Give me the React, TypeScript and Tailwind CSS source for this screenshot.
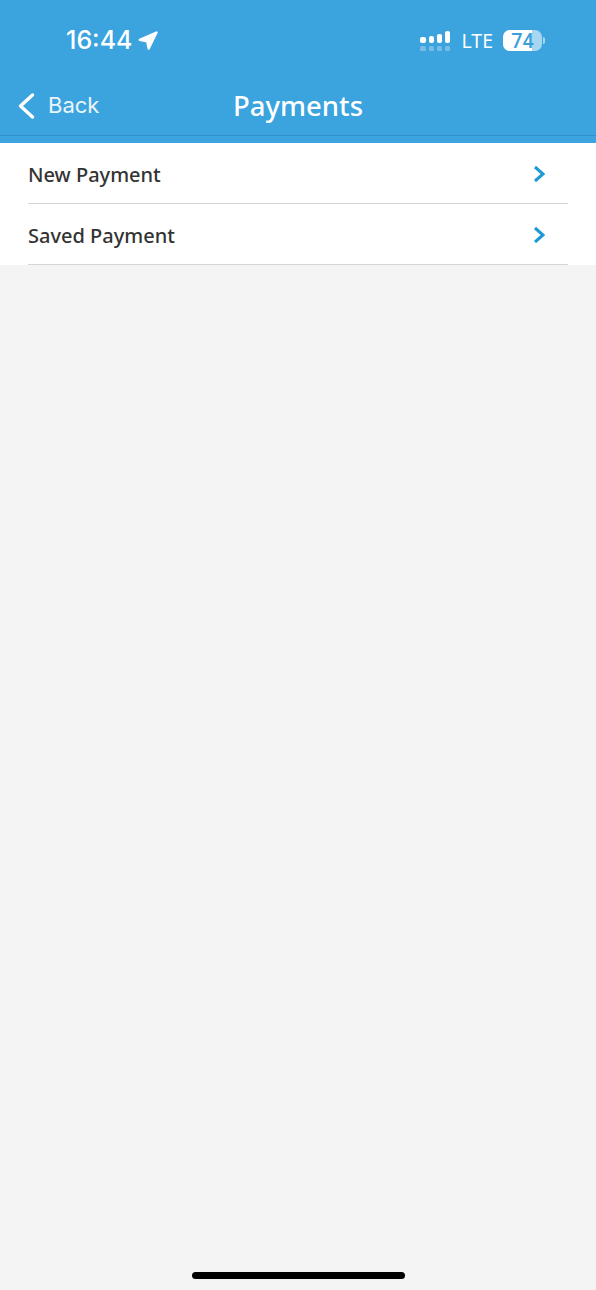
const rows = ["New Payment", "Saved Payment"];

function Signal() {
  const bars = ["h-[6px]", "h-[7px]", "h-[9px]", "h-[12px]"];
  return (
    <div className="flex flex-col gap-[3px] w-[30px]">
      <div className="flex items-end justify-between h-[12px]">
        {bars.map((h, i) => (
          <div key={i} className={`w-[5.5px] rounded-[2px] bg-white ${h}`} />
        ))}
      </div>
      <div className="flex justify-between">
        {bars.map((_, i) => (
          <div key={i} className="w-[5.5px] h-[5px] rounded-[1.5px] bg-white/30" />
        ))}
      </div>
    </div>
  );
}

function Battery() {
  return (
    <div className="flex items-center gap-[1px]">
      <div className="relative w-[39px] h-[21px] rounded-[7px] bg-white/55">
        <div className="h-full w-[29px] rounded-l-[7px] bg-white" />
        <span className="absolute inset-0 flex items-center justify-center font-['Roboto',sans-serif] text-[20px] font-medium leading-none text-[#3b9fdc]">
          74
        </span>
      </div>
      <div className="w-[2px] h-[7px] rounded-r-full bg-white/55" />
    </div>
  );
}

export default function App() {
  return (
    <div className="h-[1290px] w-[596px] overflow-hidden bg-[#f4f4f4] font-['Noto_Sans',sans-serif]">
      {/* Statusbar + Titel */}
      <header className="bg-[#3ba3de] h-[143px] text-white">
        <div className="flex h-[136px] flex-col border-b border-[#3191cb]">
          <div className="flex items-center justify-between pl-[66px] pr-[51px] pt-[21px] h-[60px]">
            <div className="flex items-center gap-[5px]">
              <span className="font-['Inter',sans-serif] text-[25px] font-medium leading-none">16:44</span>
              <svg width="20" height="20" viewBox="0 0 20 20" fill="white" stroke="white" strokeWidth="2.4" strokeLinejoin="round">
                <path d="M18.5 1.5 1.8 8.8l7.4 1.6 1.5 7.2Z" />
              </svg>
            </div>
            <div className="flex items-center">
              <Signal />
              <span className="ml-[11px] mr-[10px] text-[19.5px] leading-none">LTE</span>
              <Battery />
            </div>
          </div>
          <div className="grid flex-1 grid-cols-[1fr_auto_1fr] items-center pt-[16px]">
            <div className="flex items-center gap-[11px] pl-[17px]">
              <svg width="20" height="30" viewBox="0 0 20 30" fill="none" stroke="white" strokeWidth="3.4" strokeLinecap="round" strokeLinejoin="round">
                <path d="M15.5 4 3.5 15l12 11" />
              </svg>
              <span className="pb-[2px] font-['Inter',sans-serif] text-[22px] leading-none text-white/90">Back</span>
            </div>
            <h1 className="text-[27.5px] font-medium leading-none">Payments</h1>
            <div />
          </div>
        </div>
      </header>

      {/* Liste */}
      <ul className="bg-white px-[28px]">
        {rows.map((row) => (
          <li key={row} className="flex h-[61px] items-center justify-between border-b-[1.5px] border-[#d6d6d6]">
            <span className="pt-[4px] text-[20px] font-medium leading-none text-[#333333]">{row}</span>
            <svg className="mr-[23px] mt-[2px]" width="12" height="18" viewBox="0 0 12 18" fill="none" stroke="#1b9ad6" strokeWidth="3" strokeLinejoin="miter">
              <path d="M2 2l8 7-8 7" />
            </svg>
          </li>
        ))}
      </ul>

      <div className="mt-[1007px] flex justify-center">
        <div className="h-[7px] w-[213px] rounded-full bg-black" />
      </div>
    </div>
  );
}
